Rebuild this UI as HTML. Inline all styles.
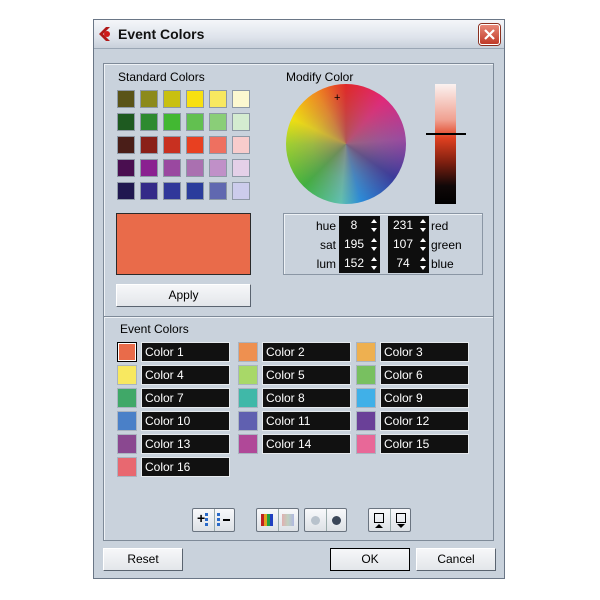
<!DOCTYPE html>
<html><head><style>
*{margin:0;padding:0;box-sizing:border-box}
body{width:600px;height:600px;background:#fff;position:relative;font-family:"Liberation Sans",sans-serif;font-size:11px;color:#000;overflow:hidden}
.a{position:absolute}
.dlg{left:93px;top:19px;width:412px;height:560px;background:#c9d2dc;border:1px solid #6a7686}
.title{left:94px;top:20px;width:410px;height:29px;background:linear-gradient(#f4f6f9,#dfe4ec 60%,#c8d0da);border-bottom:1px solid #9aa6b4}
.panel{left:103px;top:63px;width:391px;height:478px;border:1px solid #7e8a98;box-shadow:inset 1px 1px 0 #eef2f6}
.sw{width:18px;height:18px;border:1px solid #8e99a6}
.btn{background:linear-gradient(#f6f7f9,#e3e6ea);border:1px solid #fff;border-right-color:#5a6470;border-bottom-color:#5a6470;text-align:center;font-size:12px;line-height:20px}
.fld{background:#0e0e0e;color:#fff;font-size:12px;text-align:center;line-height:18px;height:19px;width:41px;padding-right:11px}
.fld:after{content:"";position:absolute;right:3px;top:3px;border:3px solid transparent;border-bottom:4px solid #fff;border-top:0}
.fld:before{content:"";position:absolute;right:3px;bottom:3px;border:3px solid transparent;border-top:4px solid #fff;border-bottom:0}
.nm{background:#111;color:#fff;font-size:12px;line-height:18px;height:20px;width:89px;padding-left:3px;border:1px solid #e6eaee}
.es{width:20px;height:20px;border:1px solid #aab4c0}
.lb{font-size:12px}
.tb{height:24px;background:linear-gradient(#f8f9fb,#dde1e6);border:1px solid #6a7480;border-radius:2px}
</style></head><body>
<div class="a dlg"></div>
<div class="a title"></div>
<svg class="a" style="left:97px;top:26px" width="16" height="16" viewBox="0 0 16 16"><path d="M9 1 L2 8 L9 15 L13 15 L6 8 L13 1Z" fill="#b01818"/><circle cx="10" cy="8" r="3" fill="#d01818"/></svg>
<div class="a" style="left:118px;top:26px;font-size:14px;font-weight:bold;color:#111">Event Colors</div>
<div class="a" style="left:479px;top:24px;width:21px;height:21px;border-radius:3px;background:linear-gradient(#e88878,#c03a28);border:1px solid #fff;box-shadow:0 0 0 1px #8a3020"><svg width="19" height="19"><path d="M5 5L14 14M14 5L5 14" stroke="#fff" stroke-width="2.2"/></svg></div>
<div class="a panel"></div>
<div class="a" style="left:104px;top:316px;width:389px;height:1px;background:#7e8a98;box-shadow:0 1px 0 #eef2f6"></div>
<div class="a lb" style="left:118px;top:70px">Standard Colors</div>
<div class="a lb" style="left:286px;top:70px">Modify Color</div>
<div id="std"></div>
<div class="a" style="left:116px;top:213px;width:135px;height:62px;background:#e96b4a;border:1px solid #2a2a2a"></div>
<div class="a btn" style="left:116px;top:284px;width:135px;height:23px">Apply</div>
<div class="a" style="left:286px;top:84px;width:120px;height:120px;border-radius:50%;background:radial-gradient(circle,rgba(150,110,110,.7) 0%,rgba(150,120,120,.25) 40%,rgba(150,120,120,0) 70%),conic-gradient(from 0deg,#e02828 0deg,#e0287a 40deg,#9a4aa0 85deg,#3a3a9a 125deg,#2a8ad8 165deg,#60c0b0 185deg,#40b040 225deg,#a0d030 270deg,#f0e010 295deg,#f08a20 330deg,#e02828 360deg)"></div>
<div class="a" style="left:334px;top:92px;font-size:11px;color:#000">+</div>
<div class="a" style="left:435px;top:84px;width:21px;height:120px;background:linear-gradient(#fbf2f0,#f0a090 30%,#e04020 45%,#802010 65%,#100808 85%,#000)"></div>
<div class="a" style="left:426px;top:133px;width:40px;height:2px;background:#000"></div>
<div class="a" style="left:283px;top:213px;width:200px;height:62px;border:1px solid #8a96a4;box-shadow:inset 1px 1px 0 #eef2f6"></div>
<div class="a lb" style="left:300px;top:219px;width:36px;text-align:right">hue</div>
<div class="a lb" style="left:300px;top:238px;width:36px;text-align:right">sat</div>
<div class="a lb" style="left:300px;top:257px;width:36px;text-align:right">lum</div>
<div class="a fld" style="left:339px;top:216px">8</div>
<div class="a fld" style="left:339px;top:235px">195</div>
<div class="a fld" style="left:339px;top:254px">152</div>
<div class="a fld" style="left:388px;top:216px">231</div>
<div class="a fld" style="left:388px;top:235px">107</div>
<div class="a fld" style="left:388px;top:254px">74</div>
<div class="a lb" style="left:431px;top:219px">red</div>
<div class="a lb" style="left:431px;top:238px">green</div>
<div class="a lb" style="left:431px;top:257px">blue</div>
<div class="a lb" style="left:120px;top:322px">Event Colors</div>
<div id="ev"></div>
<div class="a tb" style="left:192px;top:508px;width:43px"><span style="position:absolute;left:4px;top:1px;font-weight:bold;font-size:14px">+</span><span style="position:absolute;left:12px;top:4px;width:3px;height:14px;background:repeating-linear-gradient(#2a6ac8 0 3px,transparent 3px 5px)"></span><span style="position:absolute;left:21px;top:0;width:1px;height:22px;background:#9aa"></span><span style="position:absolute;left:24px;top:4px;width:3px;height:14px;background:repeating-linear-gradient(#2a6ac8 0 3px,transparent 3px 5px)"></span><span style="position:absolute;left:30px;top:10px;width:7px;height:2px;background:#000"></span></div>
<div class="a tb" style="left:256px;top:508px;width:43px"><span style="position:absolute;left:4px;top:5px;width:12px;height:12px;background:linear-gradient(90deg,#c02020 0 25%,#e0a020 25% 50%,#20a040 50% 75%,#2040c0 75%)"></span><span style="position:absolute;left:21px;top:0;width:1px;height:22px;background:#9aa"></span><span style="position:absolute;left:25px;top:5px;width:12px;height:12px;background:linear-gradient(90deg,#e0b0b0,#c0d0c0,#b0b8e0)"></span></div>
<div class="a tb" style="left:304px;top:508px;width:43px"><span style="position:absolute;left:6px;top:7px;width:9px;height:9px;border-radius:50%;background:#b8c2cc"></span><span style="position:absolute;left:21px;top:0;width:1px;height:22px;background:#9aa"></span><span style="position:absolute;left:27px;top:7px;width:9px;height:9px;border-radius:50%;background:#3a4658"></span></div>
<div class="a tb" style="left:368px;top:508px;width:43px"><span style="position:absolute;left:5px;top:4px;width:10px;height:10px;border:1px solid #000"></span><span style="position:absolute;left:6px;top:15px;border:4px solid transparent;border-bottom:4px solid #000;border-top:0"></span><span style="position:absolute;left:21px;top:0;width:1px;height:22px;background:#9aa"></span><span style="position:absolute;left:27px;top:4px;width:10px;height:10px;border:1px solid #000"></span><span style="position:absolute;left:28px;top:15px;border:4px solid transparent;border-top:4px solid #000;border-bottom:0"></span></div>
<div class="a btn" style="left:103px;top:548px;width:80px;height:23px">Reset</div>
<div class="a btn" style="left:330px;top:548px;width:80px;height:23px;border:1px solid #000">OK</div>
<div class="a btn" style="left:416px;top:548px;width:80px;height:23px">Cancel</div>
<script>
var s=[["#5a5418","#8c8a1c","#c8c010","#f8e010","#f8e860","#fcf8d0"],["#1e5a20","#2e8a30","#42b832","#62c050","#8ace78","#d4ecd0"],["#4a1e18","#8a2018","#c83020","#e84020","#ee7060","#f8cccc"],["#4a0e50","#8a2090","#9a48a0","#aa70b0","#c090c8","#e4d0e8"],["#201850","#342a88","#30389a","#2a3c9c","#6068b0","#ccccec"]];
var h="";s.forEach(function(r,i){r.forEach(function(c,j){h+='<div class="a sw" style="left:'+(117+j*23)+'px;top:'+(90+i*23)+'px;background:'+c+'"></div>'})});
document.getElementById("std").innerHTML=h;
var e=["#e96b4a","#ee9050","#eeb050","#f8e860","#a8d868","#78c060","#40a868","#40b8a8","#40b0e8","#4a80c8","#6060b0","#6a4098","#8a4890","#b04898","#e86898","#e86870"];
h="";e.forEach(function(c,i){var col=i%3,row=Math.floor(i/3);var x=[117,238,356][col],y=342+row*23;
h+='<div class="a es" style="left:'+x+'px;top:'+y+'px;background:'+c+(i==0?';border:1px solid #000;box-shadow:inset 0 0 0 1px #fff':'')+'"></div>';
h+='<div class="a nm" style="left:'+(x+24)+'px;top:'+y+'px">Color '+(i+1)+'</div>'});
document.getElementById("ev").innerHTML=h;
</script>
</body></html>
